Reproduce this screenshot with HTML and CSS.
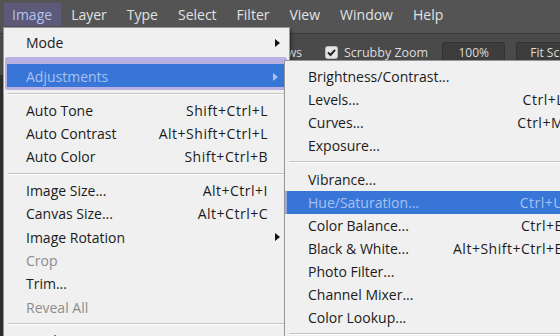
FILE: index.html
```html
<!DOCTYPE html>
<html lang="en">
<head>
  <meta charset="UTF-8">
  <title>Image menu</title>
  <link rel="stylesheet" href="styles.css">
</head>
<body>

<div class="app">
  <!-- Application menu bar -->
  <nav class="menubar">
    <span class="menubar-item active">Image</span>
    <span class="menubar-item">Layer</span>
    <span class="menubar-item">Type</span>
    <span class="menubar-item">Select</span>
    <span class="menubar-item">Filter</span>
    <span class="menubar-item">View</span>
    <span class="menubar-item">Window</span>
    <span class="menubar-item">Help</span>
  </nav>

  <!-- Zoom tool options -->
  <div class="optionsbar">
    <span class="opt-lead">Zoom All Windows</span>
    <span class="opt-check">
      <svg width="13" height="13" viewBox="0 0 13 13">
        <rect x="0.5" y="0.5" width="12" height="12" rx="2" fill="#e6e6e6" stroke="#bdbdbd"/>
        <path d="M3 6.5 L5.5 9 L10 3.8" fill="none" stroke="#222" stroke-width="2"/>
      </svg>
    </span>
    <span class="opt-label">Scrubby Zoom</span>
    <span class="opt-button">100%</span>
    <span class="opt-button fit">Fit Screen</span>
  </div>

  <!-- Image menu -->
  <div class="menu main-menu">
    <div class="item"><span class="label">Mode</span><span class="slot"><i class="arrow"></i></span></div>
    <div class="gap"></div>
    <div class="item hilite"><span class="label">Adjustments</span><span class="slot"><i class="arrow"></i></span></div>
    <div class="sep short"></div>
    <div class="item"><span class="label">Auto Tone</span><span class="keys">Shift+Ctrl+L</span><span class="slot"></span></div>
    <div class="item"><span class="label">Auto Contrast</span><span class="keys">Alt+Shift+Ctrl+L</span><span class="slot"></span></div>
    <div class="item"><span class="label">Auto Color</span><span class="keys">Shift+Ctrl+B</span><span class="slot"></span></div>
    <div class="sep"></div>
    <div class="item"><span class="label">Image Size...</span><span class="keys">Alt+Ctrl+I</span><span class="slot"></span></div>
    <div class="item"><span class="label">Canvas Size...</span><span class="keys">Alt+Ctrl+C</span><span class="slot"></span></div>
    <div class="item"><span class="label">Image Rotation</span><span class="slot"><i class="arrow"></i></span></div>
    <div class="item disabled"><span class="label">Crop</span><span class="slot"></span></div>
    <div class="item"><span class="label">Trim...</span><span class="slot"></span></div>
    <div class="item disabled"><span class="label">Reveal All</span><span class="slot"></span></div>
    <div class="sep"></div>
    <div class="item"><span class="label">Duplicate...</span><span class="slot"></span></div>
  </div>

  <!-- Adjustments submenu -->
  <div class="menu sub-menu">
    <div class="item"><span class="label">Brightness/Contrast...</span></div>
    <div class="item"><span class="label">Levels...</span><span class="keys">Ctrl+L</span></div>
    <div class="item"><span class="label">Curves...</span><span class="keys">Ctrl+M</span></div>
    <div class="item"><span class="label">Exposure...</span></div>
    <div class="sep"></div>
    <div class="item"><span class="label">Vibrance...</span></div>
    <div class="item hilite"><span class="label">Hue/Saturation...</span><span class="keys">Ctrl+U</span></div>
    <div class="item"><span class="label">Color Balance...</span><span class="keys">Ctrl+B</span></div>
    <div class="item"><span class="label">Black &amp; White...</span><span class="keys">Alt+Shift+Ctrl+B</span></div>
    <div class="item"><span class="label">Photo Filter...</span></div>
    <div class="item"><span class="label">Channel Mixer...</span></div>
    <div class="item"><span class="label">Color Lookup...</span></div>
    <div class="sep"></div>
  </div>
</div>

</body>
</html>
```

FILE: styles.css
```css
/* General */
* {
  margin: 0;
  padding: 0;
  box-sizing: border-box;
}

body {
  font-family: "Open Sans", "Noto Sans", sans-serif;
  font-size: 14px;
  background-color: #2e2e2e;
  overflow: hidden;
}

.app {
  position: relative;
  width: 560px;
  height: 336px;
  overflow: hidden;
}

/* Menu bar */
.menubar {
  display: flex;
  height: 33px;
  padding: 3px 0 0 2px;
  background-color: #545454;
}

.menubar-item {
  height: 23px;
  line-height: 23px;
  padding: 0 10px;
  color: #e2e2e2;
}

.menubar-item.active {
  margin-left: 2px;
  padding: 0 9px 0 8px;
  background-color: #5c5979;
  color: #b4c2ee;
}

/* Options bar */
.optionsbar {
  display: flex;
  align-items: center;
  height: 42px;
  padding-bottom: 4px;
  border-top: 1px solid #3c3c3c;
  background-color: #4a4a4a;
  font-size: 12px;
  color: #dcdcdc;
  white-space: nowrap;
}

.optionsbar > span {
  flex-shrink: 0;
}

.opt-lead {
  width: 302px;
  text-align: right;
}

.opt-check {
  display: flex;
  margin-left: 23px;
}

.opt-label {
  margin-left: 6px;
  font-size: 12.5px;
}

.opt-button {
  width: 63px;
  height: 22px;
  line-height: 20px;
  margin-left: 14px;
  border: 1px solid #333;
  border-radius: 2px;
  background-color: #3d3d3d;
  text-align: center;
}

.opt-button.fit {
  width: 80px;
  margin-left: 11px;
  text-align: left;
  padding-left: 13px;
}

/* Drop-down menus */
.menu {
  position: absolute;
  background-color: #f0f0f0;
  border: 1px solid #979797;
  box-shadow: 2px 2px 3px rgba(0, 0, 0, 0.35);
  color: #1b1b1b;
}

.main-menu {
  left: 3px;
  top: 27px;
  width: 287px;
  height: 340px;
  padding-top: 3px;
}

.sub-menu {
  left: 284px;
  top: 60px;
  width: 290px;
  height: 290px;
  padding-top: 4px;
}

.item {
  display: flex;
  align-items: center;
  height: 23.4px;
  padding: 0 9px 0 22px;
  white-space: nowrap;
}

.sub-menu .item {
  height: 23px;
  padding-left: 23px;
}

.label {
  flex: 1;
}

.keys {
  letter-spacing: 0.5px;
}

.slot {
  display: flex;
  justify-content: flex-end;
  width: 12px;
}

.arrow {
  width: 0;
  height: 0;
  border-top: 4px solid transparent;
  border-bottom: 4px solid transparent;
  border-left: 5px solid #111;
}

.disabled {
  color: #8c8c8c;
}

.gap {
  height: 3px;
}

.sep {
  height: 10px;
  margin: 0 2px 0 4px;
  padding-top: 4px;
}

.sep.short {
  height: 8px;
  padding-top: 3px;
}

.sep::before {
  content: "";
  display: block;
  border-top: 1px solid #c4c4c4;
  border-bottom: 1px solid #fdfdfd;
}

.sub-menu .sep {
  height: 11px;
}

/* Highlighted rows */
.item.hilite {
  background-color: #3776d7;
  color: #a9c0f0;
}

.main-menu .item.hilite {
  height: 33px;
  margin: 0 2px 0 1px;
  padding: 2px 7px 0 19px;
  border: 2px solid #b8b1e2;
  border-top-width: 7px;
  border-bottom-width: 3px;
  border-radius: 3px;
}

.hilite .arrow {
  border-left-color: #a9c0f0;
}

.sub-menu .item.hilite {
  padding-left: 21px;
  border-left: 2px solid #8eaae6;
}
```
